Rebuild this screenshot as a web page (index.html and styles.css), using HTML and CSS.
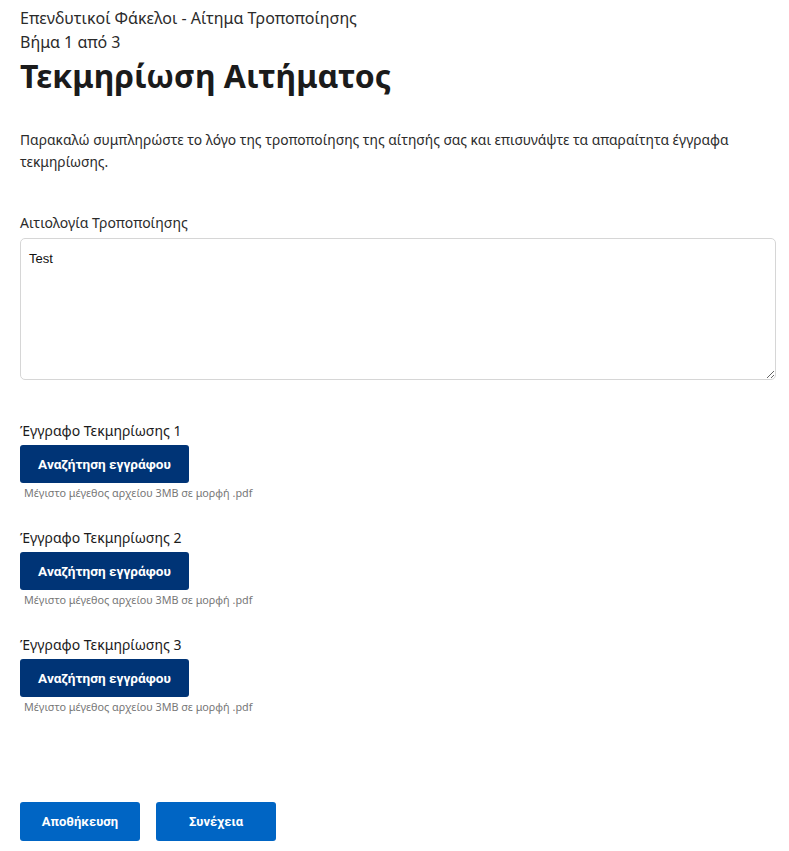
FILE: index.html
```html
<!DOCTYPE html>
<html lang="el">
<head>
    <meta charset="UTF-8">
    <meta name="viewport" content="width=device-width, initial-scale=1.0">
    <title>Τεκμηρίωση Αιτήματος</title>
    <link rel="stylesheet" href="styles.css">
</head>
<body>
    <div class="page">
        <div class="page-header">
            <div class="caption">Επενδυτικοί Φάκελοι - Αίτημα Τροποποίησης</div>
            <div class="step">Βήμα 1 από 3</div>
            <h1>Τεκμηρίωση Αιτήματος</h1>
        </div>

        <p class="intro">Παρακαλώ συμπληρώστε το λόγο της τροποποίησης της αίτησής σας και επισυνάψτε τα απαραίτητα έγγραφα τεκμηρίωσης.</p>

        <div class="field">
            <label for="reason">Αιτιολογία Τροποποίησης</label>
            <textarea id="reason" name="reason">Test</textarea>
        </div>

        <div class="upload">
            <div class="upload-label">Έγγραφο Τεκμηρίωσης 1</div>
            <button class="btn btn-dark" type="button">Αναζήτηση εγγράφου</button>
            <div class="hint">Μέγιστο μέγεθος αρχείου 3MB σε μορφή .pdf</div>
        </div>
        <div class="upload">
            <div class="upload-label">Έγγραφο Τεκμηρίωσης 2</div>
            <button class="btn btn-dark" type="button">Αναζήτηση εγγράφου</button>
            <div class="hint">Μέγιστο μέγεθος αρχείου 3MB σε μορφή .pdf</div>
        </div>
        <div class="upload">
            <div class="upload-label">Έγγραφο Τεκμηρίωσης 3</div>
            <button class="btn btn-dark" type="button">Αναζήτηση εγγράφου</button>
            <div class="hint">Μέγιστο μέγεθος αρχείου 3MB σε μορφή .pdf</div>
        </div>

        <div class="actions">
            <button class="btn btn-blue" type="button">Αποθήκευση</button>
            <button class="btn btn-blue" type="button">Συνέχεια</button>
        </div>
    </div>
</body>
</html>
```

FILE: styles.css
```css
body {
    font-family: "Noto Sans", "Open Sans", sans-serif;
    color: #1b1b1b;
    background-color: #ffffff;
    margin: 0;
    padding: 0;
}

.page {
    padding: 6px 13px 0 20px;
}

.caption {
    font-size: 16px;
    line-height: 24px;
    color: #2b2b2b;
}

.step {
    font-size: 16px;
    line-height: 24px;
    color: #2b2b2b;
}

h1 {
    font-size: 32px;
    line-height: 44px;
    font-weight: bold;
    color: #1b1b1b;
    margin: 0;
}

.intro {
    font-size: 13.8px;
    line-height: 22px;
    color: #2b2b2b;
    margin: 31px 0 0 0;
    max-width: 740px;
}

.field {
    margin-top: 40px;
}

label {
    display: block;
    font-size: 14px;
    line-height: 20px;
    color: #2b2b2b;
    margin-bottom: 5px;
}

textarea {
    display: block;
    width: 100%;
    height: 142px;
    padding: 12px 8px;
    font-size: 13px;
    font-family: "Liberation Sans", Arial, sans-serif;
    color: #111;
    border: 1px solid #d6d6d6;
    border-radius: 5px;
    box-sizing: border-box;
    resize: vertical;
}

.upload {
    margin-top: 41px;
}

.upload + .upload {
    margin-top: 28px;
}

.upload-label {
    font-size: 14px;
    line-height: 20px;
    color: #1b1b1b;
    margin-bottom: 4px;
}

.btn {
    font-family: Roboto, "Noto Sans", sans-serif;
    font-size: 13.6px;
    font-weight: bold;
    color: #ffffff;
    border: none;
    border-radius: 3px;
    height: 38px;
    cursor: pointer;
}

.btn-dark {
    background-color: #003476;
    width: 169px;
}

.hint {
    font-size: 10.8px;
    line-height: 14px;
    color: #777;
    margin: 3px 0 0 4px;
}

.actions {
    display: flex;
    gap: 16px;
    margin-top: 88px;
}

.btn-blue {
    background-color: #0065c4;
    width: 120px;
    height: 39px;
    font-size: 13px;
}
```
